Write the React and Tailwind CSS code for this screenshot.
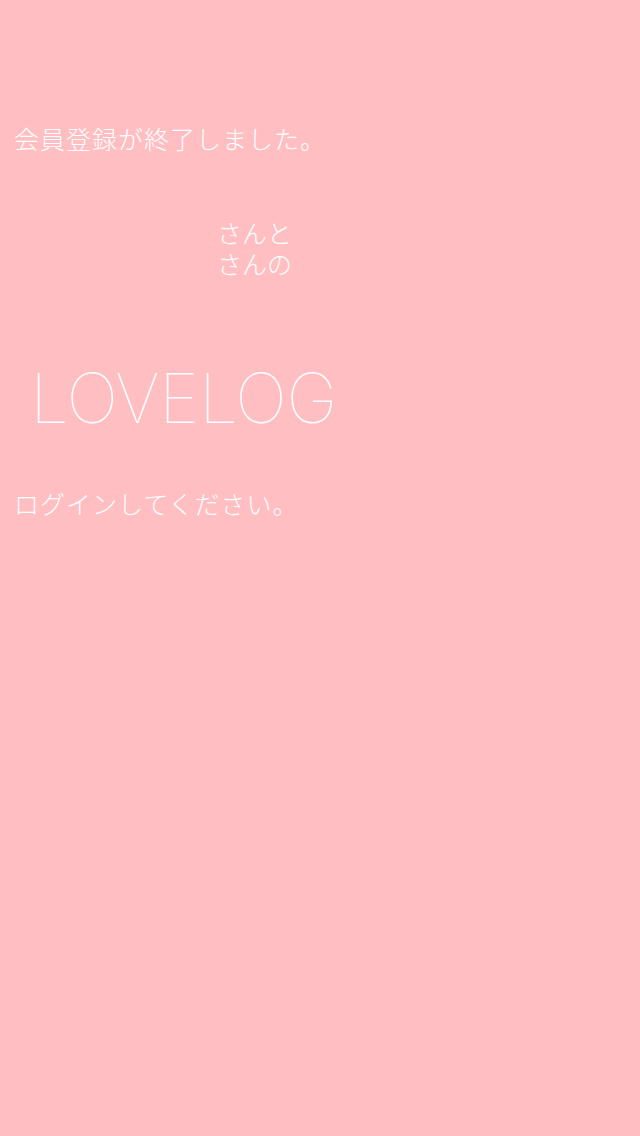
export default function App() {
  const jp = { fontFamily: '"Noto Sans CJK JP", "Noto Sans", sans-serif' };
  return (
    <div className="w-[640px] h-[1136px] bg-[#ffbec1] text-white flex flex-col font-light" style={jp}>
      <p className="mt-[122px] ml-[14px] text-[25px] leading-[32px] tracking-[1px]">会員登録が終了しました。</p>
      <div className="mt-[63px] ml-[217px] text-[25px] leading-[31px]">
        <p>さんと</p>
        <p>さんの</p>
      </div>
      <p
        className="mt-[79px] ml-[30px] text-[69px] leading-[80px] font-thin tracking-[-0.4px]"
        style={{ fontFamily: 'Inter, "Liberation Sans", sans-serif' }}
      >
        LOVELOG
      </p>
      <p className="mt-[49px] ml-[14px] text-[25px] leading-[32px] tracking-[1px]">ログインしてください。</p>
    </div>
  );
}
